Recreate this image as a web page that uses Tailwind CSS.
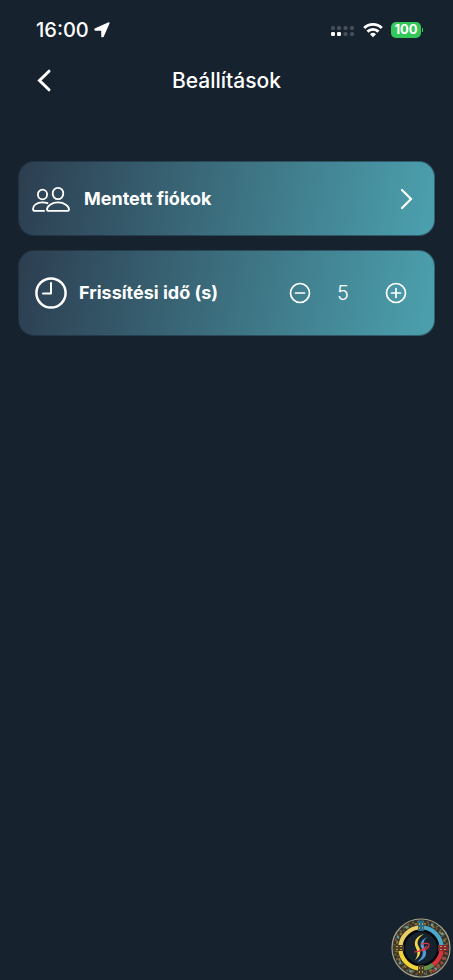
<!DOCTYPE html>
<html lang="hu">
<head>
    <meta charset="UTF-8">
    <meta name="viewport" content="width=device-width, initial-scale=1.0">
    <title>Beállítások</title>
    <script src="https://cdn.jsdelivr.net/npm/@tailwindcss/browser@4"></script>
</head>
<body class="bg-[#17222f] text-white font-['Inter','Liberation_Sans',sans-serif] min-h-screen">
    <!-- Status bar -->
    <div class="flex items-center justify-between h-[60px] pl-9 pr-[30px]">
        <div class="flex items-center gap-1">
            <span class="text-xl font-medium">16:00</span>
            <svg class="w-[18px] h-[18px]" viewBox="0 0 18 18" fill="currentColor" stroke="currentColor" stroke-width="1.500" stroke-linejoin="round">
                <path d="M15.900 2L10 15.500 9 15.500V9.500L8.500 9H2.300L2 8.200z"/>
            </svg>
        </div>
        <div class="flex items-center gap-2">
            <svg class="w-6 h-4" viewBox="0 0 24 16">
                <g fill="#454e59">
                    <rect x="0" y="4" width="4" height="4" rx="1.500"/>
                    <rect x="6" y="4" width="4" height="4" rx="1.500"/>
                    <rect x="12.500" y="4" width="4" height="4" rx="1.500"/>
                    <rect x="19" y="4" width="4" height="4" rx="1.500"/>
                    <rect x="12.500" y="10" width="4" height="4" rx="1.500"/>
                    <rect x="19" y="10" width="4" height="4" rx="1.500"/>
                </g>
                <g fill="#fff">
                    <rect x="0" y="10" width="4" height="4" rx="1.200"/>
                    <rect x="6" y="10" width="4" height="4" rx="1.200"/>
                </g>
            </svg>
            <svg class="w-5 h-4" viewBox="0 0 20 16" fill="none" stroke="currentColor" stroke-width="2.900">
                <path d="M1.200 6a12.500 12.500 0 0 1 17.600 0M4.500 9.600a7.800 7.800 0 0 1 11 0"/>
                <path d="M10 15.200l-3-3a4.300 4.300 0 0 1 6 0z" fill="currentColor" stroke="none"/>
            </svg>
            <div class="flex items-center gap-px">
                <span class="flex items-center justify-center w-[30px] h-4 rounded-[5px] bg-[#34c759] text-[13px] font-bold">100</span>
                <span class="w-px h-1 bg-[#34c759]"></span>
            </div>
        </div>
    </div>

    <!-- Header -->
    <header class="grid grid-cols-[1fr_auto_1fr] items-center h-[41px] px-9">
        <button type="button" aria-label="Vissza" class="justify-self-start">
            <svg class="w-4 h-6" viewBox="0 0 16 24" fill="none" stroke="currentColor" stroke-width="3" stroke-linecap="round">
                <path d="M13 2.200L3.500 11.500l9.500 9.300"/>
            </svg>
        </button>
        <h1 class="text-[21px] font-medium">Beállítások</h1>
    </header>

    <main class="flex flex-col gap-[14px] px-[18px] pt-[60px]">
        <a href="#" class="flex items-center h-[75px] pl-[13px] pr-5 rounded-2xl border border-[#17222f]/50 bg-linear-[100deg] from-[#2c3e50] to-[#4ca1af] bg-origin-border">
            <svg class="w-[38px] h-7" viewBox="0 0 38 28" fill="none" stroke="currentColor" stroke-width="1.800" stroke-linecap="round" stroke-linejoin="round">
                <ellipse cx="10.500" cy="9.500" rx="4.600" ry="4.900"/>
                <ellipse cx="26" cy="8.500" rx="5.300" ry="5.700"/>
                <path d="M15.500 18.200c-1.500-.6-3.400-.9-5.500-.9-5.200 0-9 3.400-9 6.600 0 1.400.7 2 2.100 2h9"/>
                <path d="M26 17.400c-6.300 0-11 3.800-11 7 0 1.100.7 1.500 2 1.500h18c1.300 0 2-.4 2-1.500 0-3.200-4.700-7-11-7z"/>
            </svg>
            <span class="ml-[14px] flex-1 text-lg font-bold">Mentett fiókok</span>
            <svg class="w-4 h-6" viewBox="0 0 16 24" fill="none" stroke="currentColor" stroke-width="2.200" stroke-linecap="round">
                <path d="M4 3l9 9-9 9"/>
            </svg>
        </a>

        <div class="flex items-center h-[86px] pl-4 pr-[27px] rounded-2xl border border-[#17222f]/50 bg-linear-[100deg] from-[#2c3e50] to-[#4ca1af] bg-origin-border">
            <svg class="w-8 h-8" viewBox="0 0 32 32" fill="none" stroke="currentColor" stroke-width="2.500" stroke-linecap="round" stroke-linejoin="round">
                <circle cx="16" cy="16" r="14.600"/>
                <path d="M16 6v10.500H8" stroke-width="2"/>
            </svg>
            <label for="refresh" class="ml-3 flex-1 text-lg font-bold">Frissítési idő (s)</label>
            <button type="button" aria-label="Csökkentés">
                <svg class="w-[22px] h-[22px]" viewBox="0 0 22 22" fill="none" stroke="currentColor" stroke-width="1.700" stroke-linecap="round">
                    <circle cx="11" cy="11" r="9.500"/>
                    <path d="M6.500 11h9"/>
                </svg>
            </button>
            <input id="refresh" type="text" inputmode="numeric" value="5" class="w-16 mr-[10px] text-center text-xl font-light">
            <button type="button" aria-label="Növelés">
                <svg class="w-[22px] h-[22px]" viewBox="0 0 22 22" fill="none" stroke="currentColor" stroke-width="1.700" stroke-linecap="round">
                    <circle cx="11" cy="11" r="9.500"/>
                    <path d="M6.500 11h9M11 6.500v9"/>
                </svg>
            </button>
        </div>
    </main>

    <!-- Floating badge -->
    <svg class="fixed right-0.5 bottom-0.5 w-[60px] h-[60px]" viewBox="0 0 60 60" fill="none">
        <circle cx="30" cy="30" r="29" fill="#33322b" stroke="#a9a28c" stroke-width="1.200"/>
        <circle cx="30" cy="30" r="26.500" stroke="#6f5f3c" stroke-width="2" stroke-dasharray="2 3"/>
        <circle cx="30" cy="30" r="24.500" stroke="#8b6f3a" stroke-width="2" stroke-dasharray="3 2 1 3"/>
        <circle cx="30" cy="30" r="25.500" stroke="#5f9ca0" stroke-width="2.500" stroke-dasharray="2.500 10.850" stroke-dashoffset="4"/>
        <path d="M55 34A25.500 25.500 0 0 1 40 54" stroke="#a83a3c" stroke-width="2.500" stroke-dasharray="2.500 3"/>
        <g stroke-width="4.500">
            <path d="M30 9.500A20.500 20.500 0 0 1 50.500 30" stroke="#49a9cc"/>
            <path d="M50.500 30A20.500 20.500 0 0 1 42 46.600" stroke="#d9343c"/>
            <path d="M42 46.600A20.500 20.500 0 0 1 30 50.500" stroke="#619050"/>
            <path d="M30 50.500A20.500 20.500 0 0 1 9.500 30" stroke="#f2d43a"/>
            <path d="M9.500 30A20.500 20.500 0 0 1 30 9.500" stroke="#e9ce68"/>
        </g>
        <circle cx="30" cy="30" r="17.200" fill="#17222f" stroke="#07090d" stroke-width="2.500"/>
        <g fill="#4b3e24">
            <path d="M27 2.500h6v10.500h-6z" fill="#286c86"/>
            <path d="M27 47h6v10h-6z"/>
            <path d="M2.500 27H13v6H2.500z"/>
            <path d="M47 27h10v6H47z" fill="#852834"/>
        </g>
        <path d="M28 5h1v2h-1zM31 5h1v2h-1zM28 9h1v2h-1zM31 9h1v2h-1zM28 49h1v2h-1zM31 49h1v2h-1zM28 53h1v2h-1zM31 53h1v2h-1zM5 28h2v1H5zM5 31h2v1H5zM9 28h2v1H9zM9 31h2v1H9zM49 28h2v1h-2zM49 31h2v1h-2zM53 28h2v1h-2zM53 31h2v1h-2z" fill="#b59b4c"/>
        <path d="M33 16c-8 2-11 8-8 14 2 4 2 8-1 12 6-4 6-9 4-13-3-5-1-9 5-13z" fill="#f1d64a"/>
        <path d="M36 19c-6 3-8 7-5 12 2 5 0 9-5 13 8-2 11-8 8-13-2-5-2-8 2-12z" fill="#5498d2"/>
        <path d="M23 34c5 0 9-2 13-6M30 26c4-1 8-1 8 1 0 3-4 5-7 6" stroke="#dc3946" stroke-width="1.200"/>
    </svg>
</body>
</html>
